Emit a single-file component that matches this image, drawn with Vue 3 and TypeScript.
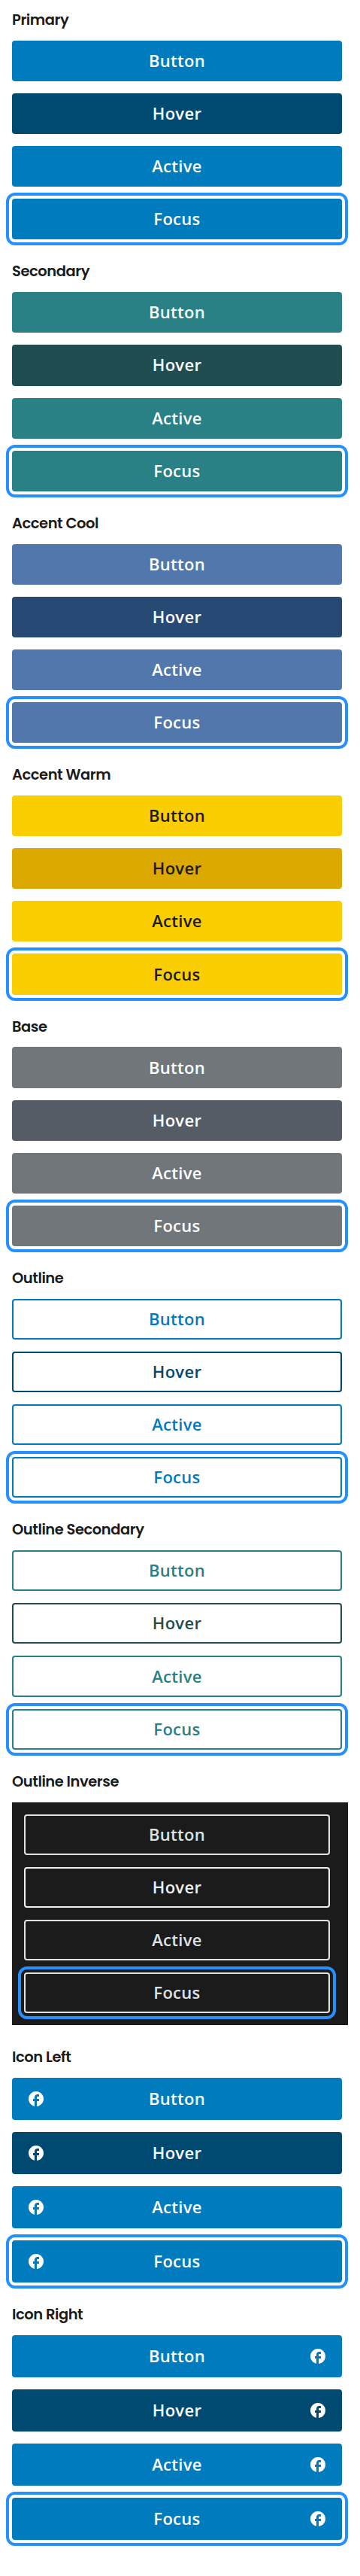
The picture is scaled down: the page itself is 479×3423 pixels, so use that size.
<script setup lang="ts">
interface Group {
  title: string
  variant: string
  icon?: 'left' | 'right'
}

const groups: Group[] = [
  { title: 'Primary', variant: 'primary' },
  { title: 'Secondary', variant: 'secondary' },
  { title: 'Accent Cool', variant: 'cool' },
  { title: 'Accent Warm', variant: 'warm' },
  { title: 'Base', variant: 'base' },
  { title: 'Outline', variant: 'outline' },
  { title: 'Outline Secondary', variant: 'outline-secondary' },
  { title: 'Outline Inverse', variant: 'inverse' },
  { title: 'Icon Left', variant: 'primary', icon: 'left' },
  { title: 'Icon Right', variant: 'primary', icon: 'right' },
]

const states = ['Button', 'Hover', 'Active', 'Focus']
</script>

<template>
  <main class="page">
    <section v-for="g in groups" :key="g.title" class="group">
      <h4 class="title">{{ g.title }}</h4>
      <div class="stack" :class="{ dark: g.variant === 'inverse' }">
        <button
          v-for="s in states"
          :key="s"
          type="button"
          class="btn"
          :class="[g.variant, s.toLowerCase(), g.icon ? 'with-icon icon-' + g.icon : '']"
        >
          <svg v-if="g.icon" class="icon" viewBox="0 0 24 24" aria-hidden="true">
            <path
              d="M22 12c0-5.52-4.48-10-10-10S2 6.48 2 12c0 4.84 3.44 8.87 8 9.8V15H8v-3h2V9.5C10 7.57 11.57 6 13.5 6H16v3h-2c-.55 0-1 .45-1 1v2h3v3h-3v6.95c5.05-.5 9-4.76 9-9.95z"
            />
          </svg>
          <span class="label">{{ s }}</span>
        </button>
      </div>
    </section>
  </main>
</template>

<style>
body {
  margin: 0;
  background: #fff;
}
</style>

<style scoped>
.page {
  box-sizing: border-box;
  padding: 16px 16px 15.5px;
  display: flow-root;
}
.group {
  display: flow-root;
  margin-bottom: 16px;
}
.title {
  margin: 0 0 16px;
  height: 21.9px;
  font: 600 19.5px/21.9px Poppins, "Open Sans", sans-serif;
  letter-spacing: -0.45px;
  color: #1b1b1b;
}
.stack {
  display: flow-root;
}
.dark {
  background: #1b1b1b;
  padding: 16px 16px 0;
  margin-bottom: 32px;
}
.group:has(.dark) {
  margin-bottom: 0;
}
.btn {
  box-sizing: border-box;
  display: flex;
  align-items: center;
  justify-content: center;
  width: calc(100% - 8px);
  height: 54.135px;
  margin: 0 8px 16px 0;
  padding: 0 20px;
  border: 0;
  border-radius: 4px;
  color: #fff;
  font: 600 22px/22px "Open Sans", "Noto Sans", sans-serif;
  letter-spacing: 0.3px;
}
.label {
  padding-bottom: 2px;
}
.primary { background: #007bbd; }
.primary.hover { background: #004971; }
.secondary { background: #298085; }
.secondary.hover { background: #204e50; }
.cool { background: #5277ac; }
.cool.hover { background: #274974; }
.warm { background: #fbce02; color: #1b1b1b; }
.warm.hover { background: #dba900; }
.base { background: #71767a; }
.base.hover { background: #565c65; }
.outline,
.outline-secondary,
.inverse {
  background: transparent;
  box-shadow: inset 0 0 0 2px currentColor;
}
.outline { color: #007bbd; }
.outline.hover { color: #004971; }
.outline-secondary { color: #298085; }
.outline-secondary.hover { color: #204e50; }
.inverse { color: #dfe1e2; }
.inverse.hover { color: #f0f0f0; }
.focus {
  outline: 4px solid #2491ff;
  outline-offset: 4px;
}
.with-icon {
  height: 56px;
}
.icon {
  width: 24px;
  height: 24px;
  fill: currentColor;
  flex: none;
}
.with-icon .label {
  flex: 1;
  text-align: center;
}
.icon-left .label { margin-right: 24px; }
.icon-right { flex-direction: row-reverse; }
.icon-right .label { margin-left: 24px; }
</style>
